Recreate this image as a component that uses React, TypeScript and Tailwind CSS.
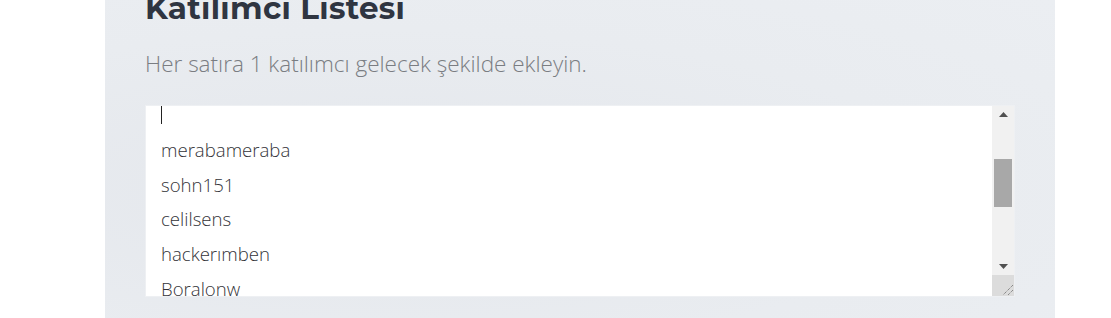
import React from "react";

const names = ["merabameraba", "sohn151", "celilsens", "hackerımben", "Boralonw", "ahmet35"];

export default function App() {
  return (
    <div className="w-[1111px] h-[318px] bg-white overflow-hidden flex">
      <div className="ml-[105px] w-[950px] h-[318px] bg-[radial-gradient(ellipse_at_30%_60%,#e4e7ec_0%,#e9ecf0_60%,#ebeef2_100%)] pl-[40px] overflow-hidden flex flex-col">
        <h1
          className="-mt-[10px] text-[31px] leading-[36px] font-bold text-[#2f3541] tracking-[0.3px]"
          style={{ fontFamily: "Montserrat, Inter, 'Noto Sans', sans-serif" }}
        >
          Katılımcı Listesi
        </h1>
        <p
          className="mt-[23px] text-[22.5px] leading-[30px] font-light text-[#7a7d82]"
          style={{ fontFamily: "'Open Sans', sans-serif" }}
        >
          Her satıra 1 katılımcı gelecek şekilde ekleyin.
        </p>
        <div className="mt-[26px] w-[870px] h-[192px] bg-white border border-[#eef0f3] flex overflow-hidden">
          <div
            className="flex-1 overflow-hidden pl-[15px] text-[18.6px] leading-[34.8px] font-light text-[#333338]"
            style={{ fontFamily: "'Open Sans', sans-serif" }}
          >
            <div className="-mt-[8px] h-[34.8px] flex items-center">
              <span className="block w-[1px] h-[18px] bg-[#222]" />
            </div>
            {names.map((n) => (
              <div key={n} className="h-[34.8px] whitespace-nowrap">
                {n}
              </div>
            ))}
          </div>
          <div className="w-[22px] flex flex-col bg-[#f1f1f1]">
            <div className="h-[17px] flex items-center justify-center">
              <svg width="9" height="5" viewBox="0 0 9 5">
                <polygon points="4.5,0 9,5 0,5" fill="#505050" />
              </svg>
            </div>
            <div className="flex-1 flex flex-col px-[2px]">
              <div className="h-[36px]" />
              <div className="h-[48px] bg-[#a8a8a8]" />
            </div>
            <div className="h-[17px] flex items-center justify-center">
              <svg width="9" height="5" viewBox="0 0 9 5">
                <polygon points="0,0 9,0 4.5,5" fill="#505050" />
              </svg>
            </div>
            <div className="h-[21px] bg-[#dcdcdc] flex items-end justify-end">
              <svg width="12" height="12" viewBox="0 0 12 12">
                <line x1="11" y1="1" x2="1" y2="11" stroke="#666" strokeWidth="1" strokeDasharray="1 1" />
                <line x1="11" y1="6" x2="6" y2="11" stroke="#666" strokeWidth="1" strokeDasharray="1 1" />
              </svg>
            </div>
          </div>
        </div>
      </div>
    </div>
  );
}
